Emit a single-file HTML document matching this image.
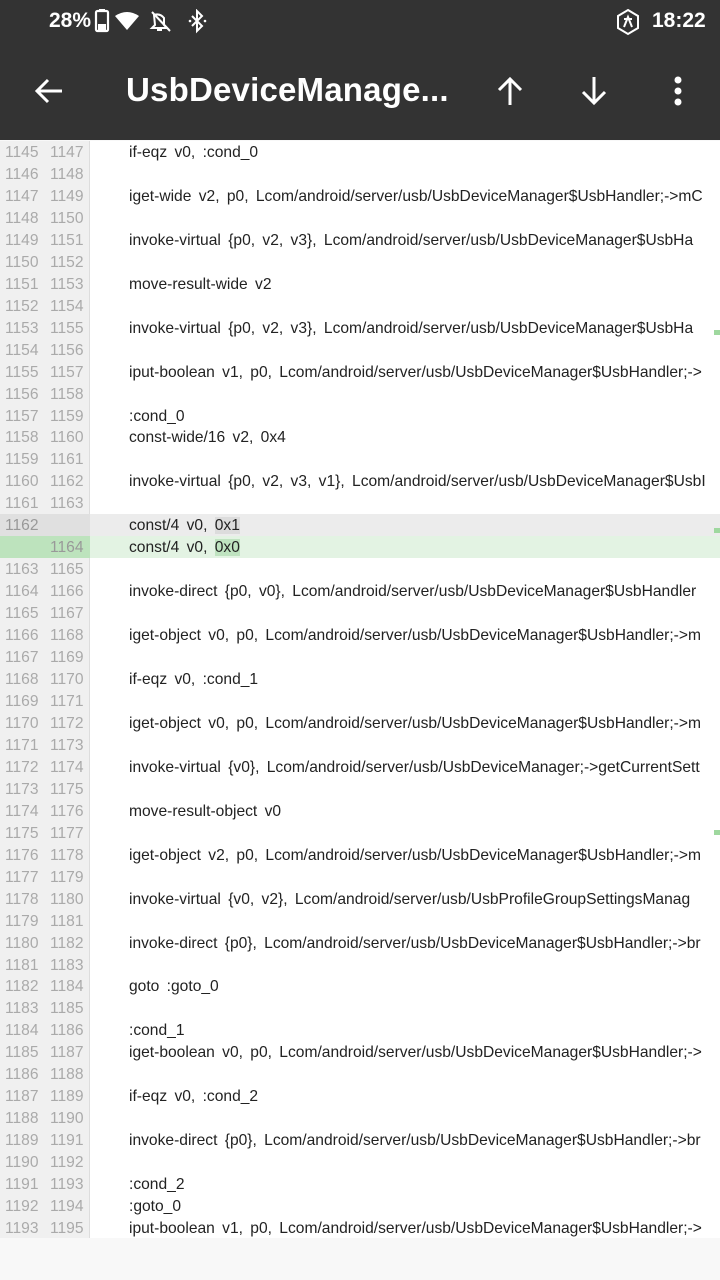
<!DOCTYPE html><html><head><meta charset="utf-8"><style>
*{margin:0;padding:0;box-sizing:border-box}
body{width:720px;height:1280px;overflow:hidden;background:#f8f8f8;font-family:"Liberation Sans",sans-serif;position:relative}
.top{position:absolute;left:0;top:0;width:720px;height:140px;background:#333}
.sb{position:absolute;top:9px;color:#fff;font-size:21px;font-weight:bold}
.title{position:absolute;left:126px;top:71px;color:#fff;font-size:33px;font-weight:bold;letter-spacing:0.2px}
.code{position:absolute;left:0;top:141px;width:720px;height:1097px;background:#fff;overflow:hidden}
.gut{position:absolute;left:0;top:0;width:90px;height:100%;background:#f0f0f0;border-right:1px solid #ddd}
.r{position:absolute;left:0;width:720px;height:22px;line-height:22px;font-size:15.6px;white-space:nowrap}
.n1{position:absolute;left:5px;top:1px;color:#aaa;width:38px}
.n2{position:absolute;left:50px;top:1px;color:#aaa}
.t{position:absolute;left:129px;top:1px;width:581px;overflow:hidden;color:#222;word-spacing:3px}
</style></head><body>
<div class="top">
<div class="sb" style="left:49px">28%</div>
<svg style="position:absolute;left:94px;top:9px" width="120" height="26" viewBox="0 0 120 26"><rect x="2" y="2" width="12" height="20" rx="1.5" fill="none" stroke="#fff" stroke-width="2.2"/><rect x="4" y="15" width="8" height="6" fill="#fff"/><rect x="5" y="0" width="6" height="3" fill="#fff"/><path d="M21 7 Q33 -1 45 7 L33 21 Z" fill="#fff"/><path d="M60 6 Q66 4 70 9 L70 16 L73 19 L58 19 L61 16 Z M63 21 h5" fill="none" stroke="#fff" stroke-width="2"/><path d="M58 3 L76 22" stroke="#fff" stroke-width="2"/><path d="M98 7 L108 17 L103 22 L103 2 L108 7 L98 17" fill="none" stroke="#fff" stroke-width="2"/><circle cx="96" cy="12" r="1.3" fill="#fff"/><circle cx="111" cy="12" r="1.3" fill="#fff"/></svg>
<svg style="position:absolute;left:615px;top:8px" width="26" height="28" viewBox="0 0 26 28"><path d="M13 2 L23 8 L23 20 L13 26 L3 20 L3 8 Z" fill="none" stroke="#fff" stroke-width="2"/><path d="M9 19 L13 9 L17 19 M9 11 h8" fill="none" stroke="#fff" stroke-width="2"/></svg>
<div class="sb" style="left:652px">18:22</div>
<svg style="position:absolute;left:32px;top:74px" width="34" height="34" viewBox="0 0 34 34"><path d="M30 17 H5 M16 6 L5 17 L16 28" fill="none" stroke="#fff" stroke-width="3"/></svg>
<div class="title">UsbDeviceManage...</div>
<svg style="position:absolute;left:493px;top:74px" width="34" height="34" viewBox="0 0 34 34"><path d="M17 31 V5 M6 16 L17 5 L28 16" fill="none" stroke="#fff" stroke-width="3"/></svg>
<svg style="position:absolute;left:577px;top:74px" width="34" height="34" viewBox="0 0 34 34"><path d="M17 3 V29 M6 18 L17 29 L28 18" fill="none" stroke="#fff" stroke-width="3"/></svg>
<svg style="position:absolute;left:668px;top:75px" width="20" height="32"><circle cx="10" cy="5" r="3.5" fill="#fff"/><circle cx="10" cy="16" r="3.5" fill="#fff"/><circle cx="10" cy="27" r="3.5" fill="#fff"/></svg>
</div>
<div class="code"><div class="gut"></div>
<div id="c"></div>
</div>
<script>
var L=[["1145","1147","if-eqz  v0,  :cond_0"],["1146","1148",""],["1147","1149","iget-wide  v2,  p0,  Lcom/android/server/usb/UsbDeviceManager$UsbHandler;->mC"],["1148","1150",""],["1149","1151","invoke-virtual  {p0,  v2,  v3},  Lcom/android/server/usb/UsbDeviceManager$UsbHa"],["1150","1152",""],["1151","1153","move-result-wide  v2"],["1152","1154",""],["1153","1155","invoke-virtual  {p0,  v2,  v3},  Lcom/android/server/usb/UsbDeviceManager$UsbHa"],["1154","1156",""],["1155","1157","iput-boolean  v1,  p0,  Lcom/android/server/usb/UsbDeviceManager$UsbHandler;->"],["1156","1158",""],["1157","1159",":cond_0"],["1158","1160","const-wide/16  v2,  0x4"],["1159","1161",""],["1160","1162","invoke-virtual  {p0,  v2,  v3,  v1},  Lcom/android/server/usb/UsbDeviceManager$UsbI"],["1161","1163",""],["1162","","const/4  v0,  <span style='background:#dcdcdc'>0x1</span>","#ececec","#e0e0e0"],["","1164","const/4  v0,  <span style='background:#bfe3c0'>0x0</span>","#e3f3e3","#bde3bd"],["1163","1165",""],["1164","1166","invoke-direct  {p0,  v0},  Lcom/android/server/usb/UsbDeviceManager$UsbHandler"],["1165","1167",""],["1166","1168","iget-object  v0,  p0,  Lcom/android/server/usb/UsbDeviceManager$UsbHandler;->m"],["1167","1169",""],["1168","1170","if-eqz  v0,  :cond_1"],["1169","1171",""],["1170","1172","iget-object  v0,  p0,  Lcom/android/server/usb/UsbDeviceManager$UsbHandler;->m"],["1171","1173",""],["1172","1174","invoke-virtual  {v0},  Lcom/android/server/usb/UsbDeviceManager;->getCurrentSett"],["1173","1175",""],["1174","1176","move-result-object  v0"],["1175","1177",""],["1176","1178","iget-object  v2,  p0,  Lcom/android/server/usb/UsbDeviceManager$UsbHandler;->m"],["1177","1179",""],["1178","1180","invoke-virtual  {v0,  v2},  Lcom/android/server/usb/UsbProfileGroupSettingsManag"],["1179","1181",""],["1180","1182","invoke-direct  {p0},  Lcom/android/server/usb/UsbDeviceManager$UsbHandler;->br"],["1181","1183",""],["1182","1184","goto  :goto_0"],["1183","1185",""],["1184","1186",":cond_1"],["1185","1187","iget-boolean  v0,  p0,  Lcom/android/server/usb/UsbDeviceManager$UsbHandler;->"],["1186","1188",""],["1187","1189","if-eqz  v0,  :cond_2"],["1188","1190",""],["1189","1191","invoke-direct  {p0},  Lcom/android/server/usb/UsbDeviceManager$UsbHandler;->br"],["1190","1192",""],["1191","1193",":cond_2"],["1192","1194",":goto_0"],["1193","1195","iput-boolean  v1,  p0,  Lcom/android/server/usb/UsbDeviceManager$UsbHandler;->"]];
var h="";L.forEach(function(r,i){var bg=r[3]?"background:"+r[3]+";":"";var gb=r[4]?"<div style='position:absolute;left:0;top:0;width:90px;height:22px;background:"+r[4]+"'></div>":"";var nc=r[3]?"color:#999;":"";h+="<div class='r' style='top:"+(i*21.96)+"px;"+bg+"'>"+gb+"<span class='n1' style='"+nc+"'>"+r[0]+"</span><span class='n2' style='"+nc+"'>"+r[1]+"</span><span class='t'>"+r[2]+"</span></div>";});
[189,387,689].forEach(function(y){h+="<div style='position:absolute;left:714px;top:"+y+"px;width:6px;height:5px;background:#9fd89f'></div>";});
document.getElementById("c").innerHTML=h;
</script>
</body></html>
